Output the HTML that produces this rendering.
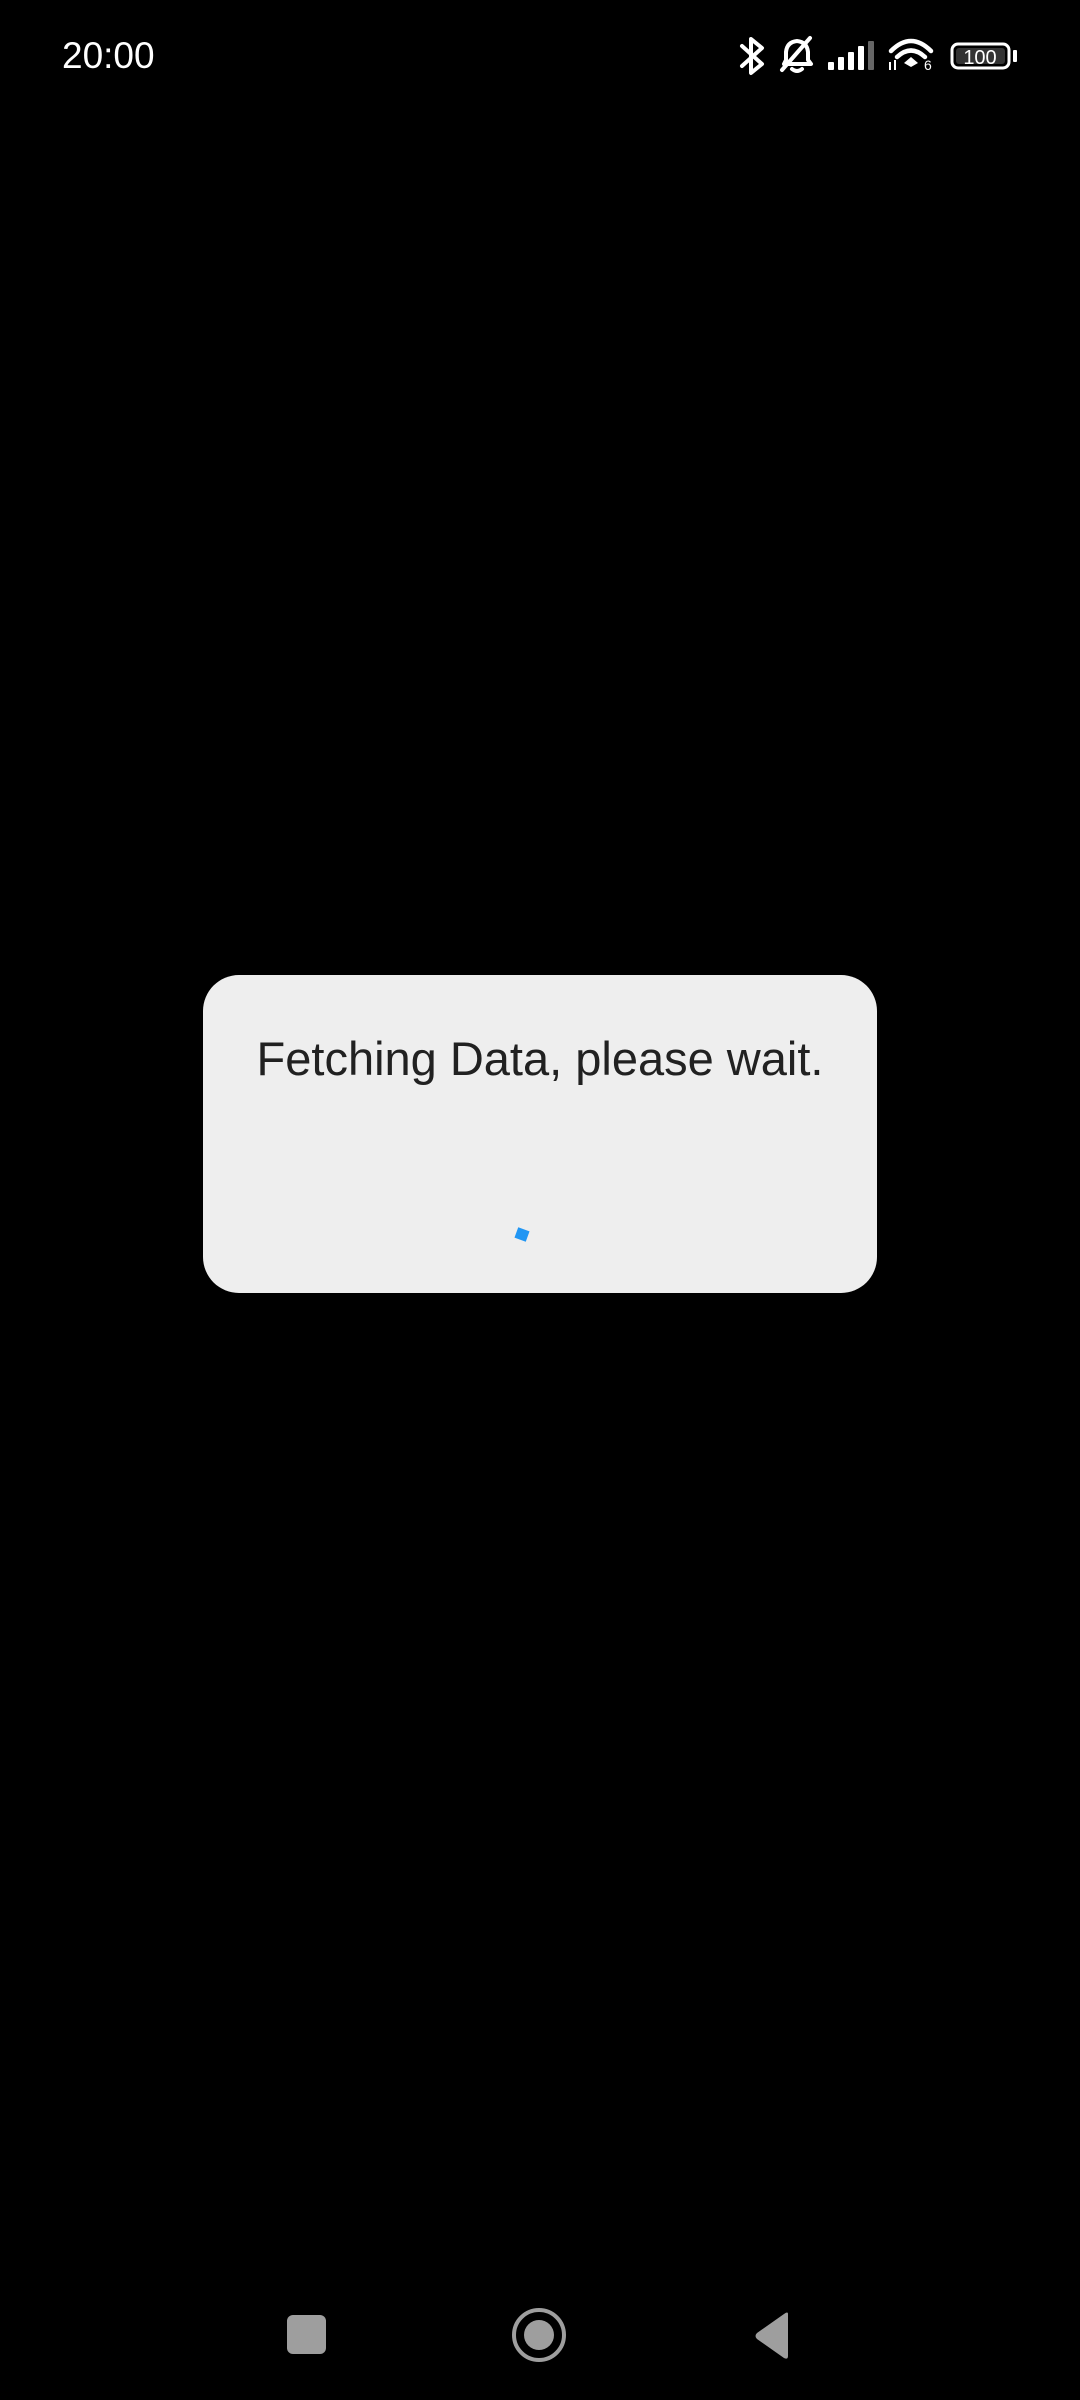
<!DOCTYPE html>
<html><head><meta charset="utf-8"><style>
html,body{margin:0;padding:0;background:#000;width:1080px;height:2400px;overflow:hidden;font-family:"Liberation Sans",sans-serif;}
.abs{position:absolute}
</style></head><body>
<div class="abs" style="left:62px;top:35px;color:#fff;font-size:37px;">20:00</div>
<svg class="abs" style="left:0;top:0" width="1080" height="100">
 <g stroke="#fff" stroke-width="4" fill="none" stroke-linejoin="round" stroke-linecap="round">
  <path d="M742 46 L762 64 L751 73 L751 39 L762 48 L742 66"/>
  <path d="M784 64 L786 60 L786 52 Q787 42 797 41 Q807 42 808 52 L808 60 L811 64 Z"/>
  <path d="M792 69 Q797 73 802 69"/>
  <path d="M782 70 L810 38"/>
 </g>
 <g fill="#fff">
  <rect x="828" y="62" width="6" height="8" rx="1"/>
  <rect x="838" y="57" width="6" height="13" rx="1"/>
  <rect x="848" y="52" width="6" height="18" rx="1"/>
  <rect x="858" y="46" width="6" height="24" rx="1" fill="#fff"/>
  <rect x="868" y="41" width="6" height="29" rx="1" fill="#666"/>
 </g>
 <g stroke="#fff" stroke-width="4.5" fill="none" stroke-linecap="round">
  <path d="M891 51 Q911 31 931 51"/>
  <path d="M897 57 Q911 44 925 57"/>
 </g>
 <path d="M904 63 L911 57 L918 63 L911 67Z" fill="#fff"/>
 <text x="924" y="70" fill="#fff" font-size="14" font-family="Liberation Sans">6</text>
 <path d="M890 62 v8 M895 60 v10" stroke="#fff" stroke-width="2"/>
 <rect x="952" y="44" width="57" height="24" rx="6" fill="none" stroke="#fff" stroke-width="3"/>
 <rect x="956" y="48" width="49" height="16" rx="3" fill="#333"/>
 <text x="980" y="64" fill="#fff" font-size="20" text-anchor="middle" font-family="Liberation Sans">100</text>
 <rect x="1013" y="50" width="4" height="12" rx="1" fill="#fff"/>
</svg>
<div class="abs" style="left:203px;top:975px;width:674px;height:318px;background:#eeeeee;border-radius:36px;"></div>
<div class="abs" style="left:203px;top:1031px;width:674px;text-align:center;color:#212121;font-size:47px;">Fetching Data, please wait.</div>
<div class="abs" style="left:516px;top:1229px;width:12px;height:11px;background:#2196f3;transform:rotate(20deg);"></div>
<svg class="abs" style="left:0;top:2290px" width="1080" height="110">
 <rect x="287" y="25" width="39" height="39" rx="6" fill="#9e9e9e"/>
 <circle cx="539" cy="45" r="25" fill="none" stroke="#9e9e9e" stroke-width="4"/>
 <circle cx="539" cy="45" r="15" fill="#9e9e9e"/>
 <path d="M788 24 L788 66 Q788 70 784 68 L757 49 Q754 46 757 43 L784 24 Q788 21 788 24Z" fill="#9e9e9e"/>
</svg>
</body></html>
